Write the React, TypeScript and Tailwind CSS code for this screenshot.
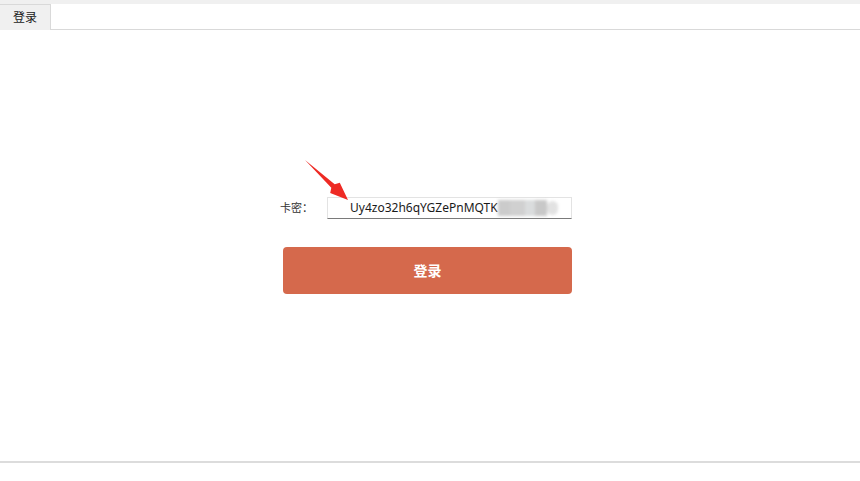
import React from "react";

function Arrow() {
  return (
    <svg
      className="pointer-events-none absolute left-[300px] top-[155px]"
      width="55"
      height="50"
      viewBox="0 0 55 50"
    >
      <polygon
        points="5,5 34.7,29.2 39.8,27.7 48,45 30.2,37.9 31.3,32.8"
        fill="#ee2a24"
      />
    </svg>
  );
}

export default function App() {
  const font = { fontFamily: '"Noto Sans", "Noto Sans CJK SC", sans-serif' };
  return (
    <div className="relative flex h-[481px] w-full flex-col bg-white text-[#1a1a1a]" style={font}>
      <div className="h-[4px] bg-[#f0f0f0]" />
      <div className="flex h-[26px]">
        <div className="flex w-[51px] items-center justify-center border-r border-t border-[#d9d9d9] bg-[#f0f0f0] text-[12px]">
          登录
        </div>
        <div className="flex-1 border-b border-[#d9d9d9]" />
      </div>

      <div className="flex-1 pl-[280px] pt-[167px]">
        <div className="flex items-center">
          <span className="w-[47px] text-[11px] text-[#333]">卡密：</span>
          <div className="flex h-[22px] w-[245px] items-center border border-[#e3e3e3] border-b-[#7a7a7a] bg-white pl-[22px] text-[12px]">
            <span>Uy4zo32h6qYGZePnMQTK</span>
            <span className="flex h-[16px] items-center blur-[1.5px]">
              <span className="h-[16px] w-[12px] bg-[#cbcbcb]" />
              <span className="h-[16px] w-[15px] bg-[#d0d0d0]" />
              <span className="h-[16px] w-[10px] bg-[#dadcdd]" />
              <span className="h-[16px] w-[12px] bg-[#c8c8c8]" />
              <span className="h-[14px] w-[11px] rounded-full bg-[#e2e2e2]" />
            </span>
          </div>
        </div>
        <button className="ml-[3px] mt-[28px] flex h-[47px] w-[289px] items-center justify-center rounded-[4px] bg-[#d5694c] text-[14px] font-bold text-white">
          登录
        </button>
      </div>

      <div className="h-[20px] border-t-2 border-[#dcdcdc]" />
      <Arrow />
    </div>
  );
}
